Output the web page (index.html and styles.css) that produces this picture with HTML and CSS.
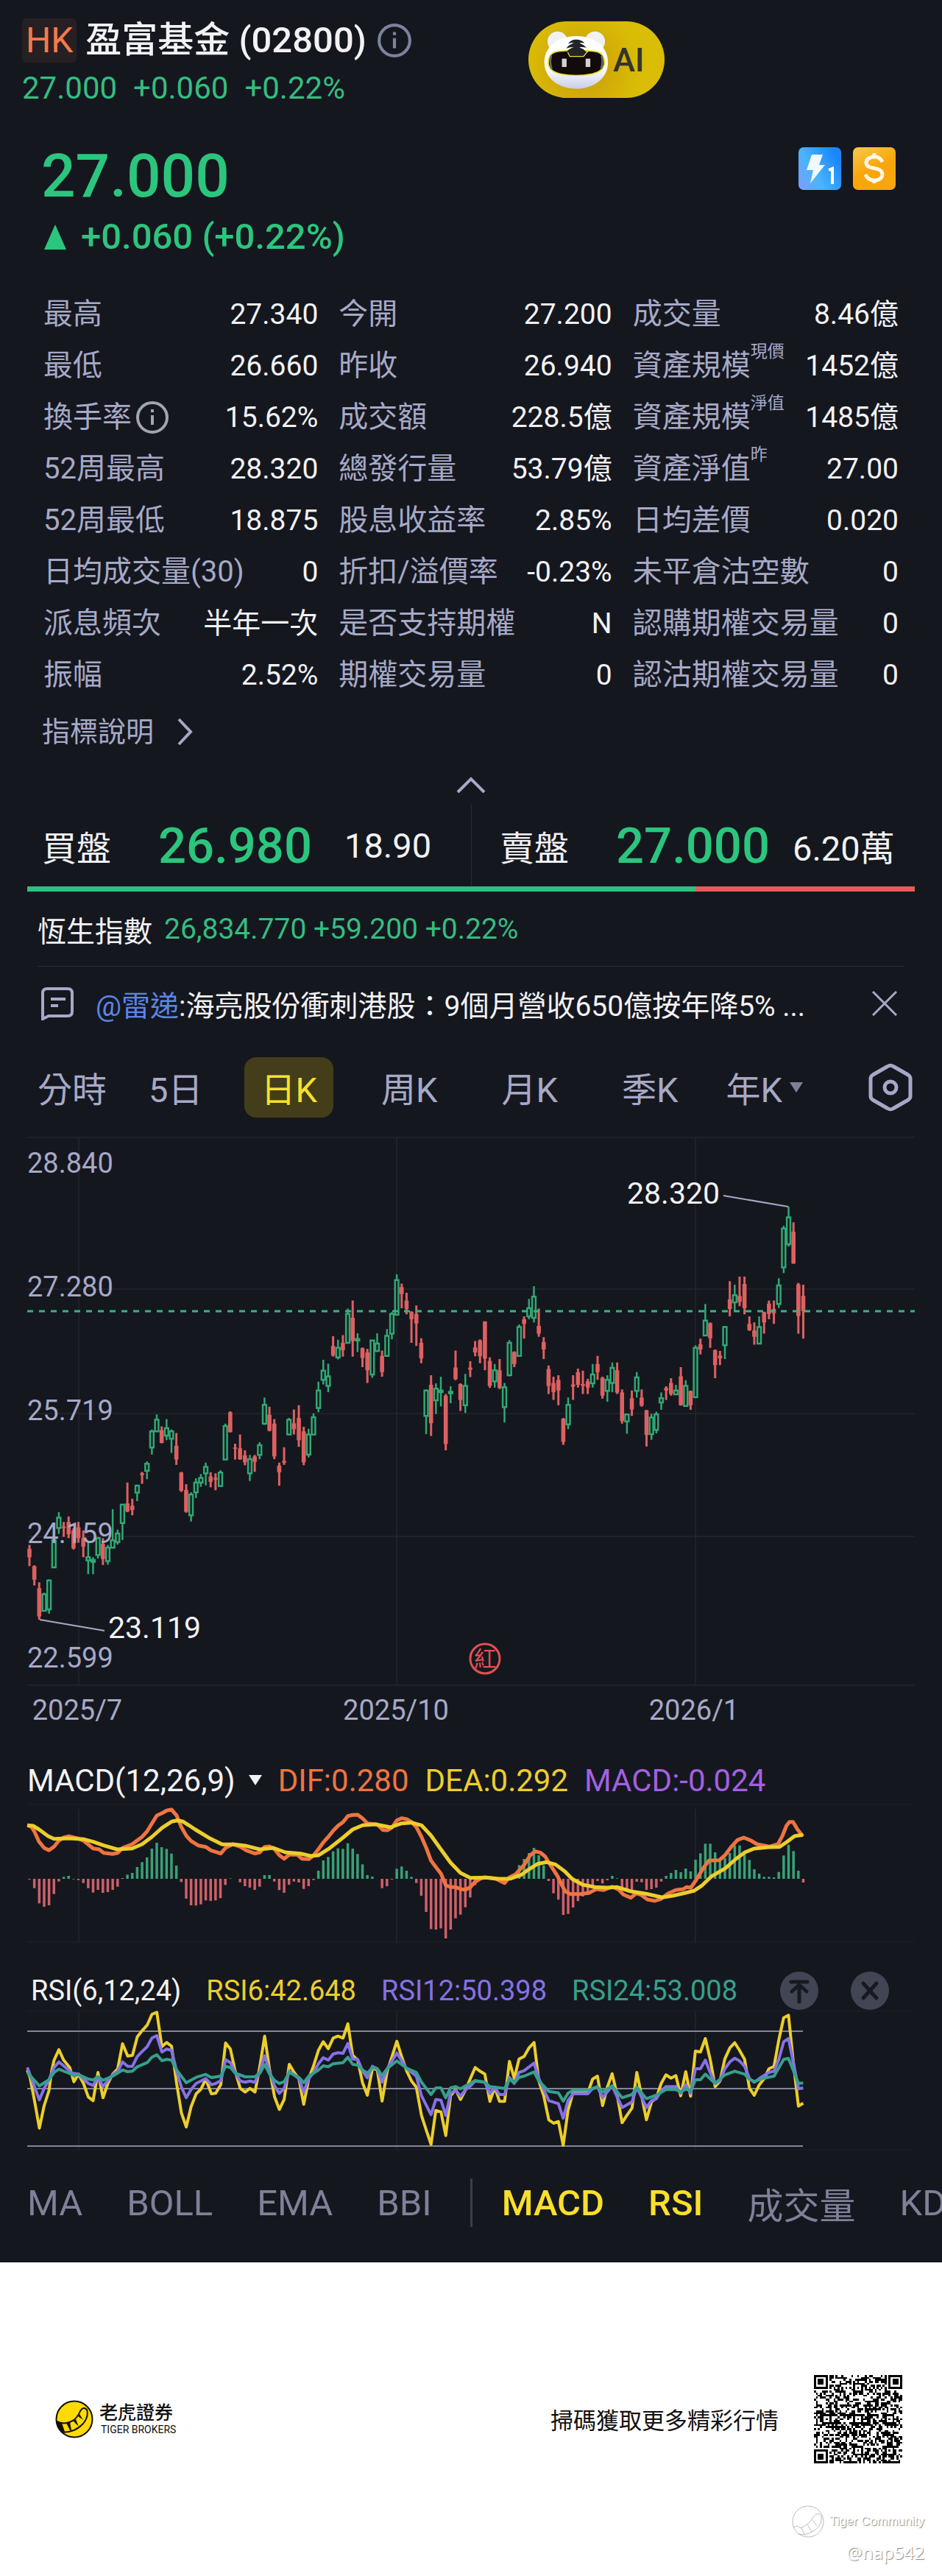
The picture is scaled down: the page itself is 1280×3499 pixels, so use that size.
FILE: index.html
```html
<!DOCTYPE html>
<html lang="zh-Hant">
<head>
    <meta charset="UTF-8">
    <meta name="viewport" content="width=device-width, initial-scale=1.0">
    <title>盈富基金 (02800)</title>
    <link rel="stylesheet" href="styles.css">
</head>
<body>

<main class="quote">
    <header class="header">
        <div>
            <h1 class="title">
                <span class="market">HK</span>
                <span>盈富基金 (02800)</span>
                <svg class="info" viewBox="0 0 46 46"><circle cx="23" cy="23" r="20"/><path d="M23 20v13M23 12v4"/></svg>
            </h1>
            <div class="subtitle"><span>27.000</span><span>+0.060</span><span>+0.22%</span></div>
        </div>
        <button class="ai-button">
            <svg class="mascot" viewBox="110 90 280 255">
                <defs>
                    <linearGradient id="fur" x1="0" y1="0" x2="0" y2="1">
                        <stop offset="0.6" stop-color="#ffffff"/>
                        <stop offset="1" stop-color="#c9cdea"/>
                    </linearGradient>
                </defs>
                <circle cx="172" cy="142" r="41" fill="#f1f1f4"/>
                <circle cx="325" cy="142" r="41" fill="#f1f1f4"/>
                <path d="M248 120C320 120 378 160 378 228C378 295 318 335 248 335C176 335 118 292 118 226C118 160 178 120 248 120Z" fill="url(#fur)"/>
                <path d="M165 184C215 176 285 176 335 184C355 190 364 208 364 230C362 258 340 268 315 274C270 283 225 283 182 274C155 268 136 256 134 230C134 205 142 190 165 184Z" fill="#120b0b" stroke="#e9df2a" stroke-width="5"/>
                <path d="M212 182L296 182L278 203L222 203Z" fill="#222429" stroke="#e9df2a" stroke-width="4"/>
                <path d="M248 134C262 134 276 140 282 148C272 146 266 146 262 148C272 152 284 158 290 168C278 164 268 164 262 166C274 170 284 176 290 186H208C214 176 226 168 238 166C228 164 218 166 208 170C214 158 226 152 238 148C230 146 224 148 216 151C222 140 234 134 248 134Z" fill="#222429"/>
                <path d="M146 200Q138 226 148 254M352 200Q360 226 350 254" fill="none" stroke="#6d6567" stroke-width="8"/>
                <rect x="190" y="212" width="19" height="34" fill="#d3d0d4"/>
                <rect x="287" y="212" width="19" height="34" fill="#d3d0d4"/>
            </svg>
            <span>AI</span>
        </button>
    </header>

    <section class="price-row">
        <div>
            <div class="price">27.000</div>
            <div class="change">
                <svg class="up" viewBox="0 0 30 34"><path d="M15 0L30 34H0Z"/></svg>
                <span>+0.060 (+0.22%)</span>
            </div>
        </div>
        <div class="badges">
            <svg viewBox="0 0 58 58">
                <defs>
                    <linearGradient id="blue" x1="0" y1="1" x2="1" y2="0.4">
                        <stop offset="0" stop-color="#7f9dff"/>
                        <stop offset="0.45" stop-color="#4ab4fb"/>
                        <stop offset="1" stop-color="#1b86fa"/>
                    </linearGradient>
                </defs>
                <rect width="58" height="58" rx="7" fill="url(#blue)"/>
                <path d="M18 10H33L28 24H36L16 49L20 31H11Z" fill="#eef8ff"/>
                <path d="M41 31L46 29V50" fill="none" stroke="#fff" stroke-width="4"/>
            </svg>
            <svg viewBox="0 0 58 58">
                <defs>
                    <linearGradient id="gold" x1="0" y1="0" x2="0.5" y2="1">
                        <stop offset="0" stop-color="#fbc84c"/>
                        <stop offset="0.6" stop-color="#f8a60c"/>
                    </linearGradient>
                </defs>
                <rect width="58" height="58" rx="7" fill="url(#gold)"/>
                <path d="M40 20C38 15 34 13 29 13C23 13 18 16 18 21C18 32 40 25 40 37C40 42 35 45 29 45C23 45 19 42 17 37M29 8V14M29 44V49" fill="none" stroke="#fff7e2" stroke-width="5"/>
            </svg>
        </div>
    </section>

    <dl class="stats">
        <div><dt>最高</dt><dd>27.340</dd></div>
        <div><dt>今開</dt><dd>27.200</dd></div>
        <div><dt>成交量</dt><dd>8.46億</dd></div>
        <div><dt>最低</dt><dd>26.660</dd></div>
        <div><dt>昨收</dt><dd>26.940</dd></div>
        <div><dt>資產規模<sup>現價</sup></dt><dd>1452億</dd></div>
        <div>
            <dt>換手率<svg class="info info-light" viewBox="0 0 46 46"><circle cx="23" cy="23" r="20"/><path d="M23 20v13M23 12v4"/></svg></dt>
            <dd>15.62%</dd>
        </div>
        <div><dt>成交額</dt><dd>228.5億</dd></div>
        <div><dt>資產規模<sup>淨值</sup></dt><dd>1485億</dd></div>
        <div><dt>52周最高</dt><dd>28.320</dd></div>
        <div><dt>總發行量</dt><dd>53.79億</dd></div>
        <div><dt>資產淨值<sup>昨</sup></dt><dd>27.00</dd></div>
        <div><dt>52周最低</dt><dd>18.875</dd></div>
        <div><dt>股息收益率</dt><dd>2.85%</dd></div>
        <div><dt>日均差價</dt><dd>0.020</dd></div>
        <div><dt>日均成交量(30)</dt><dd>0</dd></div>
        <div><dt>折扣/溢價率</dt><dd>-0.23%</dd></div>
        <div><dt>未平倉沽空數</dt><dd>0</dd></div>
        <div><dt>派息頻次</dt><dd>半年一次</dd></div>
        <div><dt>是否支持期權</dt><dd>N</dd></div>
        <div><dt>認購期權交易量</dt><dd>0</dd></div>
        <div><dt>振幅</dt><dd>2.52%</dd></div>
        <div><dt>期權交易量</dt><dd>0</dd></div>
        <div><dt>認沽期權交易量</dt><dd>0</dd></div>
    </dl>

    <a class="more" href="#">指標說明
        <svg viewBox="0 0 22 38"><path d="M3 2L19 19L3 36"/></svg>
    </a>

    <button class="collapse" aria-label="收起">
        <svg viewBox="0 0 40 24"><path d="M2 21L20 3L38 21"/></svg>
    </button>

    <section class="depth">
        <div class="side">
            <span>買盤</span><strong>26.980</strong><span>18.90</span>
        </div>
        <div class="side">
            <span>賣盤</span><strong>27.000</strong><span>6.20萬</span>
        </div>
    </section>
    <div class="ratio"><div class="ratio-bid" style="width: 75.3%"></div></div>

    <div class="index-row"><span>恆生指數</span><span class="green">26,834.770 +59.200 +0.22%</span></div>

    <div class="news">
        <svg class="news-icon" viewBox="0 0 44 46"><path d="M8 3H36Q42 3 42 9V34Q42 40 36 40H10L2 44V9Q2 3 8 3ZM13 17H33M13 26H23"/></svg>
        <p><a href="#">@雷递</a>:海亮股份衝刺港股：9個月營收650億按年降5% ...</p>
        <button class="close" aria-label="關閉">
            <svg viewBox="0 0 34 34"><path d="M1 1L33 33M33 1L1 33"/></svg>
        </button>
    </div>

    <nav class="tabs">
        <button class="tab short">分時</button>
        <button class="tab short">5日</button>
        <button class="tab active">日K</button>
        <button class="tab">周K</button>
        <button class="tab">月K</button>
        <button class="tab">季K</button>
        <button class="tab short">年K<svg class="caret" viewBox="0 0 18 14"><path d="M0 0H18L9 14Z"/></svg></button>
        <button class="settings" aria-label="設定">
            <svg viewBox="0 0 62 66"><path d="M27 4.500Q31 2 35 4.500L55 16Q58 18 58 21V45Q58 48 55 50L35 61.500Q31 64 27 61.500L7 50Q4 48 4 45V21Q4 18 7 16Z"/><circle cx="31" cy="33" r="8"/></svg>
        </button>
    </nav>

    <!-- K線圖 -->
    <svg class="chart" viewBox="0 0 1280 820">
        <path class="grid" d="M37 5H1243M37 211H1243M37 380H1243M37 547H1243M37 749H1243M107 5V749M539 5V749M945 5V749"/>
        <g id="candles"></g>
        <path class="last-price" d="M37 241H1243"/>
        <g class="axis">
            <text x="37" y="53">28.840</text>
            <text x="37" y="221">27.280</text>
            <text x="37" y="389">25.719</text>
            <text x="37" y="556">24.159</text>
            <text x="37" y="725">22.599</text>
            <text x="105" y="796" text-anchor="middle">2025/7</text>
            <text x="538" y="796" text-anchor="middle">2025/10</text>
            <text x="943" y="796" text-anchor="middle">2026/1</text>
        </g>
        <path class="leader" d="M54 660L142 675M983 84L1071 99"/>
        <g class="extreme">
            <text x="147" y="685">23.119</text>
            <text x="852" y="95">28.320</text>
        </g>
        <circle class="event-ring" cx="659" cy="713" r="20"/>
        <text class="event" x="659" y="724" text-anchor="middle">紅</text>
    </svg>

    <div class="legend">
        <span>MACD(12,26,9)<svg class="caret caret-white" viewBox="0 0 18 14"><path d="M0 0H18L9 14Z"/></svg></span>
        <span class="orange">DIF:0.280</span>
        <span class="yellow">DEA:0.292</span>
        <span class="purple">MACD:-0.024</span>
    </div>
    <svg class="chart" id="macd" viewBox="0 78 1280 200">
        <path class="grid faint" d="M37 81H1243M37 268H1243"/>
        <path class="grid" d="M107 87V269M539 87V269M945 87V269"/>
    </svg>

    <div class="legend legend-rsi">
        <span>RSI(6,12,24)</span>
        <span class="yellow">RSI6:42.648</span>
        <span class="violet">RSI12:50.398</span>
        <span class="teal">RSI24:53.008</span>
        <div class="tools">
            <button aria-label="置頂"><svg viewBox="0 0 52 52"><path d="M15 14H37M26 41V19M16 27L26 18L36 27"/></svg></button>
            <button aria-label="移除"><svg viewBox="0 0 52 52"><path d="M17 16L35 36M35 16L17 36"/></svg></button>
        </div>
    </div>
    <svg class="chart" id="rsi" viewBox="0 50 1280 200">
        <path class="grid faint" d="M37 52H1243M37 240H1243"/>
        <path class="grid" d="M107 53V240M539 53V240M945 53V240"/>
        <path class="level" d="M37 79H1091M37 157H1091M37 235H1091"/>
    </svg>

    <nav class="indicators">
        <button>MA</button>
        <button>BOLL</button>
        <button>EMA</button>
        <button>BBI</button>
        <i class="divider"></i>
        <button class="on">MACD</button>
        <button class="on">RSI</button>
        <button>成交量</button>
        <button>KDJ</button>
    </nav>
</main>

<footer class="footer">
    <svg class="logo" viewBox="0 0 52 52">
        <circle cx="26" cy="26" r="24.500" fill="#fedb00" stroke="#14110a" stroke-width="2"/>
        <path d="M2 29Q12 34 22 29Q30 25 34 15Q38 8 43 13Q46 22 38 32Q27 44 10 44Q3 38 2 29Z" fill="#fedb00" stroke="#14110a" stroke-width="2"/>
        <path d="M2 29L9 31L13 43L9 44Q3 38 2 29ZM15 31L20 30L22 41L20 41ZM24 28L28 26L32 36ZM31 22L33 19L38 27Z" fill="#14110a"/>
    </svg>
    <div class="brand">
        <b>老虎證券</b>
        <span>TIGER BROKERS</span>
    </div>
    <p class="scan">掃碼獲取更多精彩行情</p>
    <svg class="qr" id="qr" viewBox="0 0 45 45" shape-rendering="crispEdges"></svg>
    <div class="watermark">
        <div class="community">
            <svg viewBox="0 0 46 46"><circle cx="23" cy="23" r="21"/><path d="M4 31Q9 27 12 32Q24 28 30 17Q36 9 41 15Q43 26 33 34Q22 43 9 40M14 31L18 41M22 27L28 37M29 21L35 29"/></svg>
            <span>Tiger Community</span>
        </div>
        <div class="user">@nap542</div>
    </div>
</footer>

<script>
    const NS = 'http://www.w3.org/2000/svg';

    // up, high, body top, body bottom, low
    const candles = [
        [0,1068,1078,1100,1123],[0,1121,1123,1158,1173],[0,1165,1180,1254,1262],[1,1192,1196,1239,1241],[1,1157,1160,1235,1246],
        [1,1050,1055,1126,1126],[1,983,997,1024,1039],[0,1008,1020,1024,1047],[0,994,1008,1040,1050],[0,1025,1030,1077,1080],
        [0,1008,1022,1050,1062],[0,1030,1050,1072,1100],[1,1060,1100,1108,1144],[1,1100,1107,1112,1144],[1,1047,1050,1094,1103],
        [0,1050,1065,1104,1120],[1,1068,1075,1110,1119],[1,975,1056,1075,1077],[1,1028,1038,1060,1067],[1,961,963,1011,1055],
        [0,906,960,981,983],[0,948,966,977,991],[1,911,914,932,954],[0,878,882,886,909],[1,851,857,875,897],
        [1,768,773,815,833],[1,729,743,773,775],[0,760,770,803,804],[1,741,765,784,796],[1,768,773,792,829],
        [0,777,810,846,860],[0,878,880,927,930],[0,910,925,982,984],[1,931,937,991,1007],[1,895,906,931,946],
        [1,884,894,906,917],[1,854,865,882,913],[0,879,890,904,918],[0,882,894,898,926],[1,874,880,915,917],
        [1,753,759,846,848],[0,721,723,775,776],[0,805,815,818,846],[0,781,817,845,847],[0,822,835,853,861],
        [1,834,845,882,902],[0,834,838,852,878],[1,801,809,834,845],[1,685,704,753,756],[0,709,730,771,773],
        [0,741,753,838,845],[0,854,862,879,914],[0,814,850,854,860],[1,738,743,781,783],[0,716,752,767,781],
        [0,705,738,796,813],[0,761,773,853,861],[1,766,781,833,841],[1,726,736,781,783],[1,644,667,712,723],
        [1,587,615,639,651],[1,597,630,655,671],[0,526,551,576,579],[1,535,556,581,586],[0,523,543,562,579],
        [1,454,468,543,545],[0,433,478,538,579],[1,518,533,537,567],[0,555,557,582,606],[0,559,568,614,647],
        [1,535,537,625,634],[1,518,545,564,567],[0,563,577,619,631],[1,507,525,577,579],[1,463,468,519,534],
        [1,365,380,470,472],[0,389,398,416,453],[0,413,433,455,469],[0,461,463,482,543],[0,446,468,493,551],
        [0,531,543,583,596],[1,664,667,733,780],[0,627,652,752,785],[1,648,662,692,728],[1,631,667,671,708],
        [0,676,680,806,822],[1,656,670,674,700],[0,563,607,637,640],[0,648,650,691,720],[1,624,655,705,725],
        [0,591,607,613,632],[0,538,555,568,578],[0,534,537,578,596],[0,487,487,584,614],[0,581,590,655,660],
        [1,598,614,643,659],[0,585,614,660,663],[1,647,658,710,750],[1,536,543,627,630],[0,565,567,598,606],
        [1,495,502,577,579],[0,474,482,494,532],[1,429,453,474,482],[1,396,423,478,490],[0,454,499,519,527],
        [0,528,541,560,585],[0,602,611,655,676],[0,631,647,671,691],[0,627,639,667,705],[0,738,740,800,808],
        [1,685,704,755,767],[0,627,651,657,691],[0,610,619,652,659],[0,615,650,655,676],[0,636,643,659,676],
        [1,598,625,648,659],[0,577,598,619,639],[0,631,634,680,688],[1,627,639,668,696],[1,594,608,647,671],
        [0,594,614,672,676],[0,664,672,746,753],[1,727,729,747,779],[0,667,687,716,733],[1,619,633,668,685],
        [0,664,685,706,709],[0,717,718,782,812],[1,727,737,780,795],[1,722,729,769,778],[1,672,687,698,717],
        [0,656,660,667,691],[0,635,647,676,680],[1,652,667,677,679],[0,606,630,705,706],[1,640,655,707,709],
        [0,667,668,705,717],[1,549,556,684,687],[0,532,547,560,573],[1,442,485,524,526],[0,490,492,531,556],
        [0,560,562,601,635],[0,564,576,583,601],[1,499,502,549,585],[0,383,430,455,474],[1,392,419,438,461],
        [0,371,421,437,448],[0,371,390,453,469],[0,474,494,510,512],[0,490,511,527,548],[1,474,502,545,547],
        [0,462,463,490,519],[0,433,441,468,482],[0,433,455,466,494],[1,375,394,442,452],[1,239,246,347,362],
        [1,189,217,287,293],[0,230,255,337,338],[0,387,391,473,519],[0,392,421,461,532]
    ];

    const macdBars = [
        -3,-38,-100,-114,-108,-62,-11,8,12,-2,-5,-17,-38,-56,-45,-57,-54,-45,-32,3,17,24,48,68,87,123,147,129,122,103,
        54,-13,-81,-108,-109,-104,-88,-90,-88,-79,-25,2,0,-14,-30,-36,-45,-32,15,15,-11,-46,-57,-24,-11,-15,-41,-30,-5,33,
        75,89,112,124,122,145,123,101,59,15,9,0,-38,-30,-3,41,50,33,8,-17,-69,-135,-205,-207,-202,-243,-207,-161,-146,-116,
        -76,-26,-2,0,0,-4,-12,-24,12,18,56,81,105,126,96,55,-9,-59,-85,-147,-143,-117,-91,-72,-55,-32,-9,-19,-6,12,
        2,-33,-42,-50,-12,-14,-45,-42,-36,-11,12,24,36,27,42,30,78,104,143,143,108,78,85,105,136,136,108,77,39,21,
        8,8,6,28,95,139,113,33,-15
    ];

    const dif = '91,328 105,335 114,352 130,395 147,420 163,430 180,415 196,390 212,378 229,373 261,382 280,392 310,422 330,426 345,440 375,445 392,440 408,420 440,405 473,375 490,352 522,288 540,278 555,268 571,264 588,288 604,335 620,370 636,392 660,410 685,416 702,430 735,443 751,420 775,405 800,415 820,430 849,443 865,438 881,416 897,414 914,425 930,450 946,464 963,448 990,448 1005,464 1028,466 1044,450 1060,425 1076,398 1093,375 1109,350 1125,330 1142,315 1158,290 1174,286 1191,285 1207,300 1223,320 1256,325 1275,347 1290,348 1305,337 1321,308 1337,299 1354,303 1370,315 1386,335 1403,375 1419,420 1435,472 1451,498 1468,525 1484,572 1500,580 1517,580 1533,588 1550,590 1566,580 1580,560 1600,545 1614,540 1650,546 1680,563 1696,540 1716,528 1745,490 1765,450 1782,434 1800,440 1815,455 1830,485 1856,535 1870,570 1882,598 1900,608 1930,608 1960,604 1985,588 2010,592 2038,578 2060,590 2075,610 2100,623 2118,605 2135,612 2155,630 2180,636 2200,628 2225,605 2250,592 2275,588 2285,580 2300,582 2318,550 2340,505 2360,472 2395,470 2415,448 2435,415 2455,388 2476,378 2500,390 2520,405 2560,415 2590,405 2605,370 2618,330 2628,314 2640,314 2655,345 2673,373';
    const dea = '91,328 110,330 130,345 160,372 180,383 229,381 280,385 310,395 345,410 390,426 440,422 473,405 506,375 540,338 571,313 590,308 610,313 650,345 700,382 740,406 780,406 820,412 865,426 910,420 950,438 1000,443 1035,453 1060,450 1093,425 1142,378 1174,345 1207,328 1250,324 1300,336 1337,320 1370,317 1403,328 1435,370 1470,430 1500,480 1533,522 1566,542 1620,541 1660,546 1700,545 1735,530 1760,508 1790,485 1820,478 1850,488 1880,515 1905,547 1940,570 1980,580 2020,582 2055,580 2100,597 2150,607 2205,622 2240,615 2275,605 2310,595 2335,575 2370,535 2415,503 2450,465 2480,438 2510,423 2560,417 2595,416 2620,395 2645,372 2673,367';
    const rsi6 = '91,395 100,425 115,520 131,632 147,540 163,480 172,400 180,355 196,312 212,355 232,385 246,443 261,412 278,450 294,505 310,520 326,405 343,508 359,450 375,412 392,390 408,288 425,338 441,335 457,260 473,235 490,212 506,168 522,160 539,300 555,283 571,298 588,450 604,570 620,627 636,545 653,492 669,473 685,432 704,492 718,490 735,455 751,285 767,310 783,400 800,470 816,485 832,470 849,485 865,380 881,257 897,390 914,505 930,556 946,515 963,372 979,405 995,430 1011,535 1028,430 1044,378 1060,315 1076,280 1093,308 1109,265 1125,257 1142,265 1158,207 1174,335 1191,355 1207,448 1223,498 1240,388 1256,395 1272,522 1289,400 1305,340 1321,278 1337,340 1354,400 1370,440 1386,465 1403,580 1419,640 1435,698 1451,560 1468,566 1484,662 1500,500 1517,475 1533,515 1550,475 1566,430 1582,385 1598,400 1614,412 1631,523 1647,465 1663,523 1680,523 1696,360 1712,430 1728,350 1745,340 1761,305 1778,283 1794,440 1810,500 1827,598 1843,612 1859,605 1875,702 1891,560 1908,485 1925,480 1957,488 1973,432 1989,420 2006,540 2022,465 2038,410 2055,500 2071,610 2087,580 2104,550 2120,405 2136,500 2152,598 2169,525 2185,510 2201,450 2217,415 2234,428 2250,418 2266,500 2283,402 2299,502 2315,318 2332,322 2348,267 2364,350 2381,463 2397,440 2413,350 2430,305 2446,284 2462,315 2479,352 2495,470 2511,498 2528,455 2544,430 2560,390 2577,380 2593,270 2609,182 2625,172 2642,375 2658,542 2674,530';
    const rsi12 = '91,385 131,517 147,470 163,435 180,385 196,362 212,378 240,408 261,412 294,450 310,458 326,425 343,462 375,415 392,400 408,362 425,380 441,380 457,340 473,320 490,300 506,265 522,255 539,322 555,310 571,315 588,400 604,465 620,508 636,475 653,450 685,430 704,455 718,450 735,438 751,353 767,365 783,405 800,440 816,445 832,440 849,445 865,400 881,337 897,400 914,460 930,490 946,470 963,400 995,430 1011,485 1028,430 1044,405 1060,370 1076,345 1093,355 1109,330 1125,325 1142,327 1158,287 1174,350 1191,352 1207,400 1223,427 1240,380 1256,390 1272,445 1289,390 1321,326 1354,390 1386,420 1403,500 1435,577 1451,515 1468,518 1484,580 1500,490 1517,478 1533,502 1550,475 1566,460 1582,440 1614,445 1631,490 1647,468 1663,495 1680,495 1696,425 1712,450 1728,405 1745,398 1778,367 1794,430 1827,520 1859,532 1875,592 1891,520 1908,492 1957,492 1973,470 1989,463 2006,508 2038,460 2071,548 2104,525 2120,465 2152,548 2169,520 2185,512 2201,480 2217,463 2250,463 2266,490 2283,455 2299,490 2315,390 2332,390 2348,355 2364,405 2381,450 2397,438 2413,390 2430,362 2446,347 2462,358 2479,380 2495,430 2511,445 2528,430 2560,405 2577,400 2593,350 2609,280 2625,267 2642,370 2658,472 2674,468';
    const rsi24 = '91,405 131,460 163,435 180,405 196,392 229,408 246,418 261,413 294,432 310,436 326,422 343,437 375,420 408,395 425,402 441,400 457,382 490,365 506,343 522,333 539,357 555,352 571,355 588,395 620,447 653,425 685,413 704,426 735,420 751,380 767,385 783,408 816,423 849,422 865,408 881,373 897,410 914,438 930,450 946,443 963,405 995,425 1011,447 1028,420 1060,395 1076,378 1093,382 1109,370 1142,365 1158,343 1174,372 1191,375 1207,395 1223,408 1240,385 1256,390 1272,418 1289,390 1321,358 1354,388 1386,405 1403,445 1435,495 1451,468 1468,468 1484,508 1500,468 1517,463 1533,472 1550,460 1566,450 1582,438 1614,445 1631,463 1680,470 1696,432 1712,448 1728,425 1745,420 1778,403 1794,440 1827,482 1859,488 1875,522 1891,490 1908,478 1957,478 1989,465 2006,485 2038,460 2071,508 2104,495 2120,465 2152,512 2185,498 2217,475 2250,475 2266,485 2283,472 2299,482 2315,435 2332,435 2348,412 2381,450 2413,415 2446,400 2479,412 2495,433 2511,442 2544,428 2577,420 2609,352 2625,348 2642,400 2658,450 2674,448';

    function addPath(parent, className, d) {
        const path = document.createElementNS(NS, 'path');
        path.setAttribute('class', className);
        path.setAttribute('d', d);
        parent.appendChild(path);
    }

    function barX(i) {
        return 40 + i * 6.655;
    }

    function drawCandles() {
        const group = document.getElementById('candles');
        const y = v => v / 1.912;
        candles.forEach(([up, high, top, bottom, low], i) => {
            const x = barX(i);
            if (up) {
                addPath(group, 'candle-up', `M${x} ${y(high)}V${y(top)}M${x} ${y(bottom)}V${y(low)}M${x - 2.4} ${y(top)}h4.8V${y(bottom)}h-4.8Z`);
            } else {
                addPath(group, 'candle-down', `M${x - 1.5} ${y(high)}h3V${y(low)}h-3ZM${x - 2.8} ${y(top)}h5.6V${y(bottom)}h-5.6Z`);
            }
        });
    }

    function drawBars() {
        const svg = document.getElementById('macd');
        macdBars.forEach((value, i) => {
            addPath(svg, value > 0 ? 'bar-up' : 'bar-down', `M${barX(i)} 182V${182 - value / 3}`);
        });
    }

    function drawLine(id, className, points) {
        const d = points.split(' ').map(p => {
            const [x, y] = p.split(',');
            return (x / 2.45).toFixed(1) + ' ' + (y / 3).toFixed(1);
        });
        addPath(document.getElementById(id), 'line ' + className, 'M' + d.join('L'));
    }

    function drawQr() {
        const size = 45;
        let seed = 2800;
        let d = '';
        // ring pattern around a centre, returns null outside of it
        const ring = (x, y, cx, cy, r) => {
            const dist = Math.max(Math.abs(x - cx), Math.abs(y - cy));
            if (dist > r) return null;
            return r === 2 ? dist !== 1 : dist !== 2 && dist !== 4;
        };
        const marks = [[3, 3, 4], [41, 3, 4], [3, 41, 4], [22, 6, 2], [6, 22, 2], [22, 22, 2], [38, 22, 2], [22, 38, 2], [38, 38, 2]];
        for (let y = 0; y < size; y++) {
            for (let x = 0; x < size; x++) {
                seed = (seed * 1103515245 + 12345) % 2147483648;
                let dark = seed / 2147483648 < 0.52;
                if (x === 6 || y === 6) dark = (x + y) % 2 === 0;
                marks.forEach(([cx, cy, r]) => {
                    const hit = ring(x, y, cx, cy, r);
                    if (hit !== null) dark = hit;
                });
                if (dark) d += `M${x} ${y}h1v1h-1z`;
            }
        }
        addPath(document.getElementById('qr'), 'modules', d);
    }

    drawCandles();
    drawBars();
    drawLine('macd', 'orange', dif);
    drawLine('macd', 'yellow', dea);
    drawLine('rsi', 'yellow', rsi6);
    drawLine('rsi', 'violet', rsi12);
    drawLine('rsi', 'teal', rsi24);
    drawQr();
</script>

</body>
</html>
```
FILE: styles.css
```css
* {
    box-sizing: border-box;
}
body {
    margin: 0;
    background: #fff;
    font-family: Roboto, "Noto Sans CJK TC", sans-serif;
    color: #f2f2f4;
}
h1, p, dl, dd {
    margin: 0;
}
button {
    padding: 0;
    border: 0;
    background: none;
    font: inherit;
    color: inherit;
    cursor: pointer;
}
a {
    text-decoration: none;
}
svg {
    display: block;
    flex: none;
}
.quote {
    background: #15171f;
    padding-bottom: 19px;
    overflow: hidden;
}
.green {
    color: #35bd80;
}
.orange {
    color: #ef7440;
}
.yellow {
    color: #ecce2c;
}
.purple {
    color: #a260e0;
}
.violet {
    color: #8571e6;
}
.teal {
    color: #35a08c;
}

/* header */
.header {
    display: grid;
    grid-template-columns: 688fr 532fr;
    align-items: start;
    padding: 25px 30px 0;
}
.title {
    display: flex;
    align-items: center;
    font-size: 49px;
    font-weight: 500;
    line-height: 60px;
}
.market {
    margin-right: 12px;
    padding: 0 5px;
    border-radius: 6px;
    background: #272022;
    color: #f57a4c;
    font-size: 48px;
    font-weight: 400;
}
.info {
    width: 48px;
    height: 48px;
    margin-left: 14px;
    fill: none;
    stroke: #7d829e;
    stroke-width: 4;
}
.info-light {
    width: 46px;
    height: 46px;
    margin-left: 5px;
    stroke: #a3a5ad;
}
.subtitle {
    display: flex;
    gap: 22px;
    margin-top: 10px;
    font-size: 42px;
    line-height: 50px;
    color: #35bd80;
}
.ai-button {
    display: flex;
    align-items: center;
    width: 185px;
    height: 104px;
    margin-top: 4px;
    padding-left: 19px;
    border-radius: 52px;
    background: radial-gradient(circle at 40% 60%, #c99a0a, #d9bc06 60%, #dabf05);
    color: #33342a;
    font-size: 45px;
    font-weight: 500;
}
.mascot {
    width: 93px;
    height: 85px;
    margin-right: 3px;
}

/* price */
.price-row {
    display: flex;
    justify-content: space-between;
    padding: 46px 63px 0 56px;
    color: #2cc57d;
    font-weight: 500;
}
.price {
    font-size: 82px;
    line-height: 96px;
}
.change {
    display: flex;
    align-items: center;
    gap: 20px;
    padding-left: 4px;
    font-size: 49px;
    line-height: 70px;
}
.up {
    width: 30px;
    height: 34px;
    fill: #2cc57d;
}
.badges {
    display: flex;
    gap: 16px;
    padding-top: 9px;
}
.badges svg {
    width: 58px;
    height: 58px;
}

/* stats */
.stats {
    display: grid;
    grid-template-columns: 373fr 371fr 361fr;
    column-gap: 28px;
    padding: 35px 59px 0;
    line-height: 70px;
}
.stats div {
    display: flex;
    justify-content: space-between;
    white-space: nowrap;
}
.stats dt {
    display: flex;
    align-items: center;
    font-size: 40px;
    color: #a6a9c6;
}
.stats dd {
    font-size: 39px;
}
.stats sup {
    align-self: flex-start;
    font-size: 23px;
    line-height: 32px;
}
.more {
    display: flex;
    align-items: center;
    gap: 31px;
    width: fit-content;
    margin: 7px 57px 0;
    font-size: 38px;
    line-height: 70px;
    color: #a6a9c6;
}
.more svg {
    width: 22px;
    height: 38px;
}
.more svg, .collapse svg, .close svg, .news-icon, .settings svg {
    fill: none;
    stroke: #a6a9c6;
    stroke-width: 4;
}
.collapse {
    display: block;
    margin: 18px auto 0;
    padding: 8px 20px;
}
.collapse svg {
    width: 40px;
    height: 24px;
}

/* bid / ask */
.depth {
    display: grid;
    grid-template-columns: 1fr 1fr;
    margin-top: 6px;
}
.side {
    display: grid;
    grid-template-columns: 158fr 253fr 172fr;
    align-items: center;
    height: 111px;
    padding-left: 57px;
    font-size: 47px;
    white-space: nowrap;
}
.side + .side {
    grid-template-columns: 158fr 240fr 203fr;
    padding-left: 38px;
    border-left: 1px solid #2a2c35;
}
.side strong {
    font-size: 67px;
    font-weight: 500;
    color: #2cc57d;
}
.ratio {
    height: 7px;
    margin: 0 37px;
    background: #e65a59;
}
.ratio-bid {
    height: 100%;
    background: #2fc081;
}
.index-row {
    display: flex;
    align-items: center;
    gap: 16px;
    height: 102px;
    margin: 0 51px;
    border-bottom: 1px solid #2b2d38;
    font-size: 39px;
    white-space: nowrap;
}

/* news */
.news {
    display: flex;
    align-items: center;
    height: 100px;
    padding: 0 61px 0 56px;
    font-size: 39px;
}
.news p {
    flex: 1;
    margin-left: 30px;
    white-space: nowrap;
}
.news a {
    color: #5b86e8;
}
.news-icon {
    width: 44px;
    height: 46px;
}
.close svg {
    width: 34px;
    height: 34px;
    stroke-width: 3;
}

/* period tabs */
.tabs {
    display: flex;
    align-items: center;
    gap: 43px;
    height: 127px;
    padding: 0 39px 0 51px;
}
.tab {
    display: flex;
    align-items: center;
    gap: 10px;
    height: 82px;
    padding: 0 22px;
    border-radius: 16px;
    font-size: 47px;
    color: #a6a9c6;
    white-space: nowrap;
}
.tab.short {
    padding: 0 14px 0 0;
}
.tab.active {
    background: #433d1a;
    color: #f8e02a;
}
.caret {
    width: 18px;
    height: 14px;
    fill: #7f8296;
}
.settings {
    margin-left: auto;
}
.settings svg {
    width: 62px;
    height: 66px;
    stroke-width: 5;
}

/* charts */
.chart {
    width: 100%;
    height: auto;
}
.grid {
    fill: none;
    stroke: #2a2c33;
    stroke-width: 1;
}
.faint {
    stroke: #1f2129;
}
.last-price {
    stroke: #35b57e;
    stroke-width: 3;
    stroke-dasharray: 8 8;
}
.candle-up {
    fill: none;
    stroke: #30a873;
    stroke-width: 2.5;
}
.candle-down {
    fill: #de6060;
}
.axis {
    fill: #a6a9c6;
    font-size: 38px;
}
.extreme {
    fill: #f2f2f4;
    font-size: 41px;
}
.leader {
    stroke: #a6a9c6;
    stroke-width: 2;
}
.event-ring {
    fill: none;
    stroke: #e05252;
    stroke-width: 3;
}
.event {
    fill: #e05252;
    font-size: 30px;
}
.bar-up, .bar-down {
    stroke: #38a276;
    stroke-width: 3.5;
}
.bar-down {
    stroke: #cf6068;
}
.line {
    fill: none;
    stroke: currentColor;
    stroke-width: 5;
    stroke-linejoin: round;
}
#rsi .line {
    stroke-width: 4;
}
.level {
    stroke: #83859b;
    stroke-width: 2;
}
.legend {
    display: flex;
    align-items: center;
    gap: 22px;
    height: 60px;
    margin-top: 28px;
    padding: 0 37px;
    font-size: 42px;
    white-space: nowrap;
}
.legend span {
    display: flex;
    align-items: center;
}
.caret-white {
    margin-left: 18px;
    fill: #f2f2f4;
}
.legend-rsi {
    gap: 34px;
    height: 52px;
    margin-top: 30px;
    padding-left: 42px;
    font-size: 38px;
}
.tools {
    display: flex;
    gap: 44px;
    margin-left: 24px;
}
.tools svg {
    width: 52px;
    height: 52px;
    border-radius: 50%;
    background: #424554;
    fill: none;
    stroke: #181a22;
    stroke-width: 5;
    stroke-linecap: round;
}

/* indicator list */
.indicators {
    display: flex;
    align-items: center;
    gap: 60px;
    height: 124px;
    padding-left: 37px;
    font-size: 49px;
    color: #7f8199;
    white-space: nowrap;
    overflow: hidden;
}
.indicators button {
    flex: none;
}
.indicators .on {
    color: #f8e02a;
    font-weight: 500;
}
.divider {
    flex: none;
    width: 3px;
    height: 66px;
    margin: 0 -20px 0 -8px;
    background: #3c3e47;
}

/* footer */
.footer {
    position: relative;
    display: flex;
    align-items: center;
    min-height: 425px;
    padding: 0 54px 0 75px;
    color: #111;
}
.logo {
    width: 52px;
    height: 52px;
}
.brand {
    display: flex;
    flex-direction: column;
    margin-left: 8px;
    font-size: 25px;
    line-height: 28px;
}
.brand b {
    font-weight: 500;
}
.brand span {
    padding-left: 2px;
    font-size: 14px;
    line-height: 16px;
}
.scan {
    margin-left: auto;
    font-size: 31px;
}
.qr {
    width: 120px;
    height: 120px;
    margin-left: 48px;
}
.modules {
    fill: #000;
}
.watermark {
    position: absolute;
    right: 24px;
    bottom: 12px;
    color: #fff;
    font-family: "Liberation Sans", sans-serif;
    text-align: right;
    text-shadow: 1px 1px 1px #888;
}
.community {
    display: flex;
    align-items: center;
    gap: 6px;
    font-size: 17px;
}
.community svg {
    width: 46px;
    height: 46px;
    fill: none;
    stroke: #bbb;
    stroke-width: 1;
}
.user {
    font-family: "Noto Sans", sans-serif;
    font-size: 24px;
    line-height: 38px;
}
```
